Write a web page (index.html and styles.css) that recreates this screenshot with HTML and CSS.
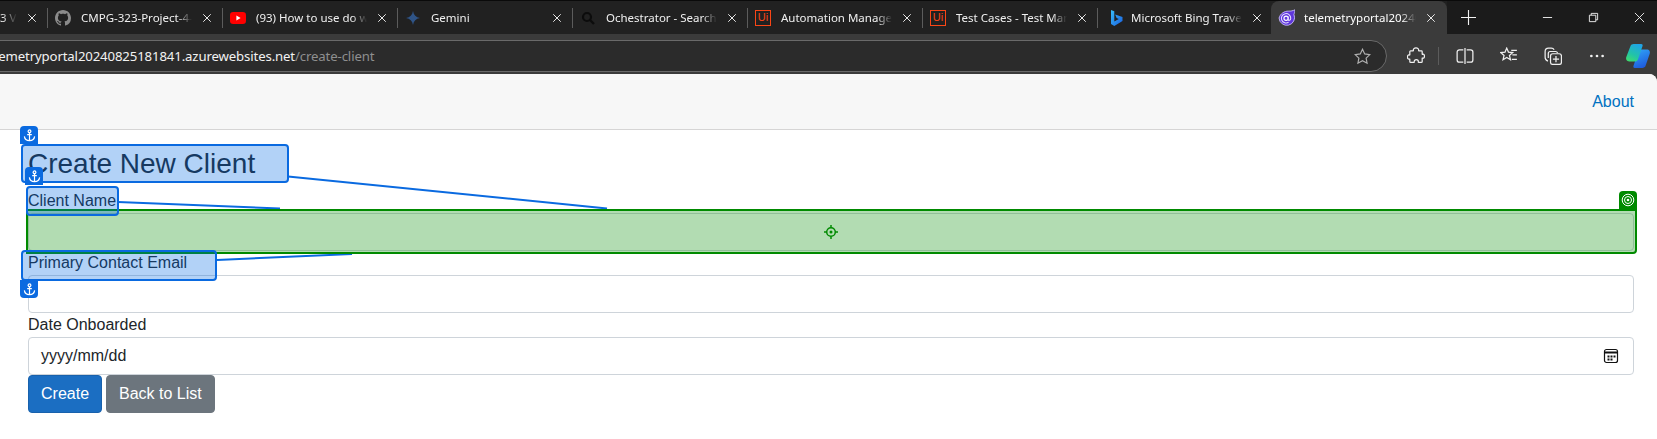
FILE: index.html
```html
<!DOCTYPE html>
<html lang="en">
<head>
<meta charset="utf-8">
<title>Create New Client</title>
<link rel="stylesheet" href="styles.css">
</head>
<body>
<div class="browser">
  <div class="tabstrip">
    <div class="tabs">
      <div class="tab tab-first"><span class="tab-title first-title">3 V</span><svg class="close" viewBox="0 0 12 12"><path d="M1.5 1.5l9 9M10.5 1.5l-9 9"/></svg></div>
      <div class="sep"></div>
      <div class="tab">
        <svg class="fav" viewBox="0 0 16 16"><path fill="#8b8b8b" d="M8 0C3.58 0 0 3.58 0 8c0 3.54 2.29 6.53 5.47 7.59.4.07.55-.17.55-.38 0-.19-.01-.82-.01-1.49-2.01.37-2.53-.49-2.69-.94-.09-.23-.48-.94-.82-1.13-.28-.15-.68-.52-.01-.53.63-.01 1.08.58 1.23.82.72 1.21 1.87.87 2.33.66.07-.52.28-.87.51-1.07-1.78-.2-3.64-.89-3.64-3.95 0-.87.31-1.59.82-2.15-.08-.2-.36-1.02.08-2.12 0 0 .67-.21 2.2.82.64-.18 1.32-.27 2-.27s1.36.09 2 .27c1.53-1.04 2.2-.82 2.2-.82.44 1.1.16 1.92.08 2.12.51.56.82 1.27.82 2.15 0 3.07-1.87 3.75-3.65 3.95.29.25.54.73.54 1.48 0 1.07-.01 1.93-.01 2.2 0 .21.15.46.55.38A8.01 8.01 0 0016 8c0-4.42-3.58-8-8-8z"/></svg>
        <span class="tab-title">CMPG-323-Project-4-Telemetry</span>
        <svg class="close" viewBox="0 0 12 12"><path d="M1.5 1.5l9 9M10.5 1.5l-9 9"/></svg>
      </div>
      <div class="sep"></div>
      <div class="tab">
        <svg class="fav" viewBox="0 0 16 16"><rect y="2" width="16" height="12" rx="3.2" fill="#f00"/><path fill="#fff" d="M6.4 5.6L10.6 8l-4.2 2.4z"/></svg>
        <span class="tab-title">(93) How to use do while loop</span>
        <svg class="close" viewBox="0 0 12 12"><path d="M1.5 1.5l9 9M10.5 1.5l-9 9"/></svg>
      </div>
      <div class="sep"></div>
      <div class="tab">
        <svg class="fav" viewBox="0 0 16 16"><path fill="#2f5487" d="M8 1c.6 4 3 6.400 7 7-4 .6-6.400 3-7 7-.6-4-3-6.400-7-7 4-.6 6.400-3 7-7z"/></svg>
        <span class="tab-title">Gemini</span>
        <svg class="close" viewBox="0 0 12 12"><path d="M1.5 1.5l9 9M10.500 1.500l-9 9"/></svg>
      </div>
      <div class="sep"></div>
      <div class="tab">
        <svg class="fav" viewBox="0 0 16 16"><circle cx="7" cy="7" r="4" fill="none" stroke="#0c0c0c" stroke-width="2.200"/><path d="M10 10l4 4" stroke="#0c0c0c" stroke-width="2.400"/></svg>
        <span class="tab-title">Ochestrator - Search</span>
        <svg class="close" viewBox="0 0 12 12"><path d="M1.5 1.5l9 9M10.500 1.500l-9 9"/></svg>
      </div>
      <div class="sep"></div>
      <div class="tab">
        <span class="ui-logo">Ui</span>
        <span class="tab-title">Automation Manager - Orchestrator</span>
        <svg class="close" viewBox="0 0 12 12"><path d="M1.5 1.5l9 9M10.500 1.500l-9 9"/></svg>
      </div>
      <div class="sep"></div>
      <div class="tab">
        <span class="ui-logo">Ui</span>
        <span class="tab-title">Test Cases - Test Manager</span>
        <svg class="close" viewBox="0 0 12 12"><path d="M1.5 1.5l9 9M10.500 1.500l-9 9"/></svg>
      </div>
      <div class="sep"></div>
      <div class="tab">
        <svg class="fav fav-bing" viewBox="0 0 16 16"><defs><linearGradient id="bing" x1="0" y1="0" x2="1" y2="1"><stop offset="0" stop-color="#37bdf8"/><stop offset="1" stop-color="#1a5fe0"/></linearGradient></defs><path fill="url(#bing)" d="M3 0l3.300 1.200v10.400l4.500-2.600-2.200-1-1.400-3.500 7.300 2.500v3.900L6.300 16 3 14.100z"/></svg>
        <span class="tab-title">Microsoft Bing Travel - Search</span>
        <svg class="close" viewBox="0 0 12 12"><path d="M1.5 1.5l9 9M10.500 1.500l-9 9"/></svg>
      </div>
      <div class="tab tab-active">
        <svg class="fav fav-big" viewBox="0 0 16 16"><path d="M16 .800c-.3 2.200-.6 3.200-1 4.400A7.300 7.300 0 111 8.500C2 4.500 6 1.800 10 2c2 .1 4-.4 6-1.200z" fill="#5f37dc" stroke="#cfc2ff" stroke-width=".8"/><circle cx="7.600" cy="8.700" r="2" fill="none" stroke="#fff" stroke-width="1.100"/><path d="M9.600 7v2.800c0 1.400 2.400 1.200 2.400-1.100a4.400 4.400 0 10-2 3.700" fill="none" stroke="#e4dcff" stroke-width="1"/></svg>
        <span class="tab-title">telemetryportal20240825181841</span>
        <svg class="close" viewBox="0 0 12 12"><path d="M1.5 1.5l9 9M10.500 1.500l-9 9"/></svg>
      </div>
    </div>
    <svg class="newtab" viewBox="0 0 16 16"><path d="M8 0v16M0 8h16"/></svg>
    <div class="winctrls">
      <div class="winbtn"><svg viewBox="0 0 12 12"><path d="M1 6h10"/></svg></div>
      <div class="winbtn"><svg viewBox="0 0 12 12"><path d="M1.500 3.500h7v7h-7zM3.500 3.500v-2h7v7h-2"/></svg></div>
      <div class="winbtn"><svg viewBox="0 0 12 12"><path d="M1 1l10 10M11 1L1 11"/></svg></div>
    </div>
  </div>
  <div class="toolbar">
    <div class="addressbar">
      <span class="url">telemetryportal20240825181841.azurewebsites.net<span class="url-path">/create-client</span></span>
      <svg class="star" viewBox="0 0 16 16"><path d="M8 1.200l2.100 4.400 4.800.6-3.500 3.300.9 4.800L8 12l-4.300 2.300.9-4.800L1.100 6.200l4.800-.6z"/></svg>
    </div>
    <div class="tools">
      <div class="tool"><svg viewBox="0 0 16 16"><path d="M5.700 3.200C5.400 1.800 6.500.8 8 .8s2.600 1 2.300 2.400c0 .2.100.3.300.3h2.200c.4 0 .7.300.7.700v2.100c0 .2.200.3.400.2 1.100-.4 1.600.7 1.600 1.700s-.6 2.100-1.600 1.700c-.2-.1-.4 0-.4.200v2.700c0 .5-.3.800-.8.800h-2.400c-.3 0-.4-.2-.3-.5.300-1-.5-1.900-1.700-1.900s-2 .9-1.800 1.900c.1.300 0 .5-.3.500H3.300c-.5 0-.8-.3-.8-.8V11c0-.2-.2-.3-.4-.2C1 11.100.4 10 .4 8.900s.6-2.200 1.700-1.800c.2.100.4 0 .4-.2V4.200c0-.4.300-.7.700-.7h2.200c.2 0 .3-.1.300-.3z"/></svg></div>
      <div class="tool-sep"></div>
      <div class="tool"><svg viewBox="0 0 16 16"><path d="M6.500 2.500H3a2 2 0 00-2 2v7a2 2 0 002 2h3.500M9.500 2.500H13a2 2 0 012 2v7a2 2 0 01-2 2H9.500M8 .8v14.400"/></svg></div>
      <div class="tool"><svg viewBox="0 0 16 16"><path d="M6 1l1.500 3.500 3.800.4-2.900 2.600.9 3.800L6 9.300l-3.300 2 .9-3.800L.7 4.900l3.800-.4zM10 3h5M11 7h4M10.500 11H15"/></svg></div>
      <div class="tool"><svg viewBox="0 0 16 16"><path d="M3.500 12.500C1.800 11.800 1 10.700 1 9V4c0-1.700 1.300-3 3-3h2.500c1.100 0 2 .5 2.500 1.500M3.800 9.800V5.800C3.800 4.800 4.500 4 5.500 4h4.800c.8 0 1.500.5 1.800 1.400"/><rect x="5.800" y="6" width="9.700" height="9.500" rx="2"/><path d="M10.650 8v5.500M7.900 10.750h5.500"/></svg></div>
      <div class="tool"><svg viewBox="0 0 16 16"><circle class="dot" cx="3" cy="8" r="1.200"/><circle class="dot" cx="8" cy="8" r="1.200"/><circle class="dot" cx="13" cy="8" r="1.200"/></svg></div>
      <div class="tool tool-copilot"><svg class="copilot" viewBox="0 0 24 24"><defs><linearGradient id="cpa" x1="0.700" y1="0" x2="0.200" y2="1"><stop offset="0" stop-color="#1fa4e8"/><stop offset="0.600" stop-color="#22c3a8"/><stop offset="1" stop-color="#3ddc6f"/></linearGradient><linearGradient id="cpb" x1="0.300" y1="0" x2="0.700" y2="1"><stop offset="0" stop-color="#2fa0f5"/><stop offset="1" stop-color="#1d57dc"/></linearGradient></defs><path fill="url(#cpb)" d="M15 6h5c2.500 0 3.500 2 2.800 4L19 21c-.4 1.200-1.600 2-3 2H9c-1 0-1.500-.8-1.200-1.800L12 8.500c.3-1 1.500-2.500 3-2.500z"/><path fill="url(#cpa)" d="M8 1h7c1 0 1.500.8 1.200 1.800L12 15c-.3 1-1 2-2.500 2H4c-2.500 0-3.500-2-2.800-4L5 3c.4-1.200 1.600-2 3-2z"/></svg></div>
    </div>
  </div>

  <div class="page">
    <nav class="topnav"><a class="about" href="#">About</a></nav>
    <main class="content">
      <h1 class="title">Create New Client</h1>
      <form class="form">
        <label class="label">Client Name</label>
        <div class="input"></div>
        <label class="label">Primary Contact Email</label>
        <div class="input"></div>
        <label class="label">Date Onboarded</label>
        <div class="input input-date">
          <span>yyyy/mm/dd</span>
          <svg class="cal" viewBox="0 0 16 16"><rect x="1.500" y="1.500" width="13" height="13" rx="2" fill="none" stroke="#111" stroke-width="1.200"/><path d="M1.500 4.500h13" stroke="#111" stroke-width="2"/><path d="M4.500 7.500h2v2h-2zM7.500 7.500h2v2h-2zM10.500 7.500h2v2h-2zM4.500 10.500h2v2h-2zM7.500 10.500h2v2h-2z" fill="#111"/></svg>
        </div>
        <div class="actions">
          <button type="button" class="btn btn-primary">Create</button>
          <button type="button" class="btn btn-secondary">Back to List</button>
        </div>
      </form>
    </main>
  </div>

  <div class="overlay">
    <svg class="leaders" viewBox="0 0 1657 439">
      <line x1="288" y1="176.500" x2="607" y2="208.500"/>
      <line x1="118" y1="202" x2="280" y2="208.500"/>
      <line x1="217" y1="260" x2="352" y2="254"/>
    </svg>
    <div class="hl-green">
      <svg class="target-center" viewBox="0 0 14 14"><circle cx="7" cy="7" r="4.300" fill="none" stroke="#008a00" stroke-width="1.500"/><circle cx="7" cy="7" r="1.500" fill="#008a00"/><path d="M7 0v2.500M7 11.500V14M0 7h2.500M11.500 7H14" stroke="#008a00" stroke-width="1.500"/></svg>
    </div>
    <div class="badge-green"><svg viewBox="0 0 14 14"><circle cx="7" cy="7" r="5.800" fill="none" stroke="#fff" stroke-width="1"/><circle cx="7" cy="7" r="3.500" fill="none" stroke="#fff" stroke-width="1"/><circle cx="7" cy="7" r="1.300" fill="#fff"/></svg></div>

    <div class="hl hl-title"></div>
    <div class="hl hl-name"></div>
    <div class="hl hl-email"></div>
    <div class="anchor anchor-title"><svg viewBox="0 0 14 14"><circle cx="7" cy="2.500" r="1.500"/><path d="M7 4v8.500M4.500 6h5M1.500 8c.3 2.800 2.600 4.500 5.500 4.500s5.200-1.700 5.500-4.500"/></svg></div>
    <div class="anchor anchor-name"><svg viewBox="0 0 14 14"><circle cx="7" cy="2.500" r="1.500"/><path d="M7 4v8.500M4.500 6h5M1.500 8c.3 2.800 2.600 4.500 5.500 4.500s5.200-1.700 5.500-4.500"/></svg></div>
    <div class="anchor anchor-email"><svg viewBox="0 0 14 14"><circle cx="7" cy="2.500" r="1.500"/><path d="M7 4v8.500M4.500 6h5M1.500 8c.3 2.800 2.600 4.500 5.500 4.500s5.200-1.700 5.500-4.500"/></svg></div>
  </div>
</div>
</body>
</html>
```
FILE: styles.css
```css
* { box-sizing: border-box; }
html, body { margin: 0; height: 100%; }
body { overflow: hidden; background: #3b3b3b; }

.browser {
  position: relative;
  width: 1657px;
  height: 439px;
  display: flex;
  flex-direction: column;
  overflow: hidden;
  font-family: "Liberation Sans", Arial, sans-serif;
}

/* tab strip */
.tabstrip {
  flex: 0 0 34px;
  display: flex;
  align-items: stretch;
  background: #1b1b1b;
  border-top: 1px solid #0a0a0a;
  overflow: hidden;
}
.tabs { display: flex; align-items: stretch; background: #212121; }
.tab {
  flex: 0 0 174px;
  min-width: 0;
  display: flex;
  align-items: center;
  padding: 0 9px 0 7px;
  font: 11.5px/16px "Noto Sans", sans-serif;
  color: #f0f0f0;
}
.tab-first { flex: 0 0 47px; padding: 0 9px 0 0; }
.tab-active {
  flex: 0 0 176px;
  margin-left: -1px;
  padding: 0 10px 0 7px;
  background: #3b3b3b;
  border-radius: 8px 8px 0 0;
  color: #fff;
}
.sep { flex: 0 0 1px; height: 20px; align-self: center; background: #5c5c5c; }
.fav { flex: 0 0 16px; width: 16px; height: 16px; margin-right: 10px; }
.fav-bing { margin-left: 3px; margin-right: 7px; }
.fav-big { flex-basis: 17px; width: 17px; height: 17px; margin-right: 9px; }
.tab-title {
  flex: 1;
  min-width: 0;
  white-space: nowrap;
  overflow: hidden;
  -webkit-mask-image: linear-gradient(to right, #000 calc(100% - 18px), transparent calc(100% - 3px));
  mask-image: linear-gradient(to right, #000 calc(100% - 18px), transparent calc(100% - 3px));
}
.close { flex: 0 0 10px; width: 10px; height: 10px; margin: 0 1px 0 7px; fill: none; stroke: #e6e6e6; stroke-width: 1.200; }
.ui-logo {
  flex: 0 0 16px;
  width: 16px;
  height: 16px;
  margin-right: 10px;
  border: 1.500px solid #fa4616;
  color: #fa4616;
  font: 11px/13px "Liberation Sans", sans-serif;
  text-align: center;
}
.newtab { width: 15px; height: 15px; align-self: center; margin-left: 14px; fill: none; stroke: #f2f2f2; stroke-width: 1.200; }
.winctrls { display: flex; margin-left: auto; margin-right: -5px; }
.winbtn { width: 46px; display: flex; align-items: center; justify-content: center; }
.winbtn svg { width: 11px; height: 11px; fill: none; stroke: #f2f2f2; stroke-width: 1; }

/* toolbar */
.toolbar {
  flex: 0 0 40px;
  display: flex;
  align-items: flex-start;
  padding-top: 6px;
  background: #3b3b3b;
  overflow: hidden;
}
.addressbar {
  flex: 1;
  height: 32px;
  margin-left: -32px;
  display: flex;
  align-items: center;
  justify-content: space-between;
  padding: 0 15px 0 14px;
  background: #2b2b2b;
  border: 1px solid #6a6a6a;
  border-radius: 0 16px 16px 0;
}
.url { font: 13.2px/18px "Noto Sans", sans-serif; letter-spacing: -0.13px; color: #f2f2f2; white-space: nowrap; }
.url-path { color: #8f8f8f; }
.star { width: 17px; height: 17px; fill: none; stroke: #b0b0b0; stroke-width: 1.100; }
.tools { flex: 0 0 269px; display: flex; align-items: center; height: 32px; padding-left: 7px; }
.tool { flex: 0 0 44px; display: flex; justify-content: center; }
.tool svg { width: 18px; height: 18px; fill: none; stroke: #f0f0f0; stroke-width: 1.100; }
.tool svg .dot { fill: #f0f0f0; stroke: none; }
.tool-sep { flex: 0 0 1px; height: 18px; margin-right: 4px; background: #5c5c5c; }
.tool-copilot { flex-basis: 38px; }
.tool svg.copilot { width: 26px; height: 26px; stroke: none; }

/* page */
.page { flex: 1; background: #fff; border-top-right-radius: 8px; color: #212529; font-size: 16px; line-height: 24px; overflow: hidden; }
.topnav {
  height: 56px;
  display: flex;
  align-items: center;
  justify-content: flex-end;
  padding: 0 23px 0 0;
  background: #f7f7f7;
  border-bottom: 1px solid #d6d5d5;
}
.about { color: #0071c1; text-decoration: none; }
.content { padding: 14px 23px 0 28px; }
.title { margin: 0 0 5px; font-size: 28px; font-weight: 400; line-height: 40px; }
.form { display: flex; flex-direction: column; }
.label { display: block; height: 24px; }
.input { height: 38px; background: #fff; border: 1px solid #ced4da; border-radius: 4px; }
.input-date { display: flex; align-items: center; justify-content: space-between; padding: 0 14px 0 12px; }
.cal { width: 16px; height: 16px; }
.actions { display: flex; gap: 4px; }
.btn {
  height: 38px;
  padding: 0 12px;
  border: 1px solid transparent;
  border-radius: 4px;
  font: 16px/24px "Liberation Sans", sans-serif;
  color: #fff;
}
.btn-primary { background: #1b6ec2; border-color: #1861ac; }
.btn-secondary { background: #6c757d; border-color: #6c757d; }

/* annotation overlay */
.overlay { position: absolute; inset: 0; pointer-events: none; }
.leaders { position: absolute; inset: 0; width: 1657px; height: 439px; }
.leaders line { stroke: #0a6ae0; stroke-width: 2; }
.hl { position: absolute; background: rgba(0, 105, 230, 0.3); border: 2px solid #0a6ae0; border-radius: 4px; }
.hl-title { left: 21px; top: 144px; width: 268px; height: 39px; }
.hl-name { left: 26px; top: 186px; width: 93px; height: 30px; }
.hl-email { left: 21px; top: 250px; width: 196px; height: 31px; }
.hl-green {
  position: absolute;
  left: 26px;
  top: 209px;
  width: 1611px;
  height: 45px;
  display: flex;
  align-items: center;
  justify-content: center;
  background: rgba(0, 138, 0, 0.3);
  border: 2px solid #008a00;
  border-radius: 0 0 4px 0;
}
.target-center { width: 14px; height: 14px; margin-left: -1px; }
.badge-green {
  position: absolute;
  left: 1619px;
  top: 191px;
  width: 18px;
  height: 18px;
  display: flex;
  align-items: center;
  justify-content: center;
  background: #008a00;
  border-radius: 4px 4px 0 0;
}
.badge-green svg { width: 14px; height: 14px; }
.anchor {
  position: absolute;
  width: 18px;
  height: 18px;
  display: flex;
  align-items: center;
  justify-content: center;
  background: #0a6ae0;
}
.anchor svg { width: 13px; height: 13px; fill: none; stroke: #fff; stroke-width: 1.300; }
.anchor-title { left: 20px; top: 126px; border-radius: 4px 4px 0 0; }
.anchor-name { left: 25px; top: 167px; border-radius: 4px 4px 0 0; }
.anchor-email { left: 20px; top: 280px; border-radius: 0 0 4px 4px; }
```
